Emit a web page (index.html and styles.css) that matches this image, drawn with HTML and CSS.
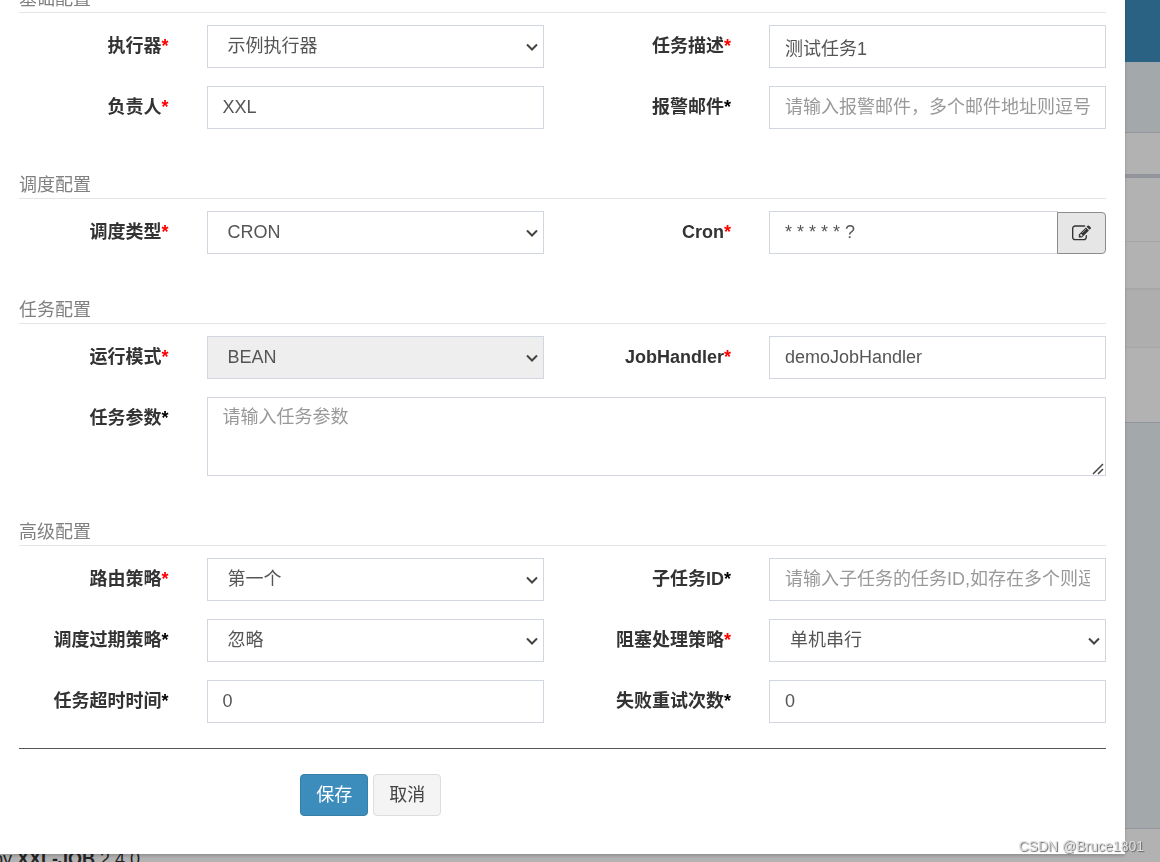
FILE: index.html
```html
<!DOCTYPE html>
<html lang="zh-CN">
<head>
<meta charset="utf-8">
<title>任务管理 - XXL-JOB</title>
<link rel="stylesheet" href="styles.css">
</head>
<body>
<svg class="defs" width="0" height="0" aria-hidden="true">
  <symbol id="chevron" viewBox="0 0 12 8"><path d="M1 1.500l5 5 5-5" fill="none" stroke="currentColor" stroke-width="2"/></symbol>
</svg>
<div class="page">
  <div class="topbar"></div>
  <div class="content-head"></div>
  <div class="box">
    <div class="box-filter"></div>
    <div class="box-table">
      <div class="tools"></div>
      <div class="thead"></div>
      <div class="row-odd"></div>
      <div class="row-even"></div>
    </div>
  </div>
  <footer class="page-footer">by <b>XXL-JOB</b> 2.4.0</footer>
</div>

<div class="backdrop">
  <form class="modal">
    <h2 class="section-title first">基础配置</h2>
    <div class="fields">
      <label for="group">执行器<span class="req">*</span></label>
      <div class="cell"><select id="group" class="control"><option>示例执行器</option></select><svg class="chevron"><use href="#chevron"/></svg></div>
      <label for="desc">任务描述<span class="req">*</span></label>
      <div class="cell"><input id="desc" class="control" type="text" value="测试任务1"></div>
      <label for="author">负责人<span class="req">*</span></label>
      <div class="cell"><input id="author" class="control" type="text" value="XXL"></div>
      <label for="email">报警邮件<span class="opt">*</span></label>
      <div class="cell"><input id="email" class="control" type="text" placeholder="请输入报警邮件，多个邮件地址则逗号分隔"></div>
    </div>

    <h2 class="section-title">调度配置</h2>
    <div class="fields">
      <label for="schedule">调度类型<span class="req">*</span></label>
      <div class="cell"><select id="schedule" class="control"><option>CRON</option></select><svg class="chevron"><use href="#chevron"/></svg></div>
      <label for="cron">Cron<span class="req">*</span></label>
      <div class="cell">
        <input id="cron" class="control" type="text" value="* * * * * ?">
        <button type="button" class="addon" aria-label="编辑 Cron">
          <svg class="icon" viewBox="0 0 1792 1792" aria-hidden="true"><path d="M888 1184l116-116-152-152-116 116v56h96v96h56zm440-720q-16-16-33 1l-350 350q-17 17-1 33t33-1l350-350q17-17 1-33zm80 594v190q0 119-84.500 203.500t-203.500 84.500h-832q-119 0-203.500-84.500t-84.500-203.500v-832q0-119 84.500-203.500t203.500-84.500h832q63 0 117 25 15 7 18 23 3 17-9 29l-49 49q-14 14-32 8-23-6-45-6h-832q-66 0-113 47t-47 113v832q0 66 47 113t113 47h832q66 0 113-47t47-113v-126q0-13 9-22l64-64q15-15 35-7t20 29zm-96-738l288 288-672 672h-288v-288zm444 132l-92 92-288-288 92-92q28-28 68-28t68 28l152 152q28 28 28 68t-28 68z"/></svg>
        </button>
      </div>
    </div>

    <h2 class="section-title">任务配置</h2>
    <div class="fields">
      <label for="mode">运行模式<span class="req">*</span></label>
      <div class="cell"><select id="mode" class="control" disabled><option>BEAN</option></select><svg class="chevron"><use href="#chevron"/></svg></div>
      <label for="handler">JobHandler<span class="req">*</span></label>
      <div class="cell"><input id="handler" class="control" type="text" value="demoJobHandler"></div>
      <label for="param">任务参数<span class="opt">*</span></label>
      <div class="cell wide">
        <textarea id="param" class="control" placeholder="请输入任务参数"></textarea>
        <svg class="grip" viewBox="0 0 12 12" aria-hidden="true"><path d="M1 11L11 1M6 11l5-5" fill="none" stroke="#444" stroke-width="1.500"/></svg>
      </div>
    </div>

    <h2 class="section-title">高级配置</h2>
    <div class="fields">
      <label for="route">路由策略<span class="req">*</span></label>
      <div class="cell"><select id="route" class="control"><option>第一个</option></select><svg class="chevron"><use href="#chevron"/></svg></div>
      <label for="child">子任务ID<span class="opt">*</span></label>
      <div class="cell"><input id="child" class="control" type="text" placeholder="请输入子任务的任务ID,如存在多个则逗号分隔"></div>
      <label for="misfire">调度过期策略<span class="opt">*</span></label>
      <div class="cell"><select id="misfire" class="control"><option>忽略</option></select><svg class="chevron"><use href="#chevron"/></svg></div>
      <label for="block">阻塞处理策略<span class="req">*</span></label>
      <div class="cell"><select id="block" class="control"><option>单机串行</option></select><svg class="chevron"><use href="#chevron"/></svg></div>
      <label for="timeout">任务超时时间<span class="opt">*</span></label>
      <div class="cell"><input id="timeout" class="control" type="text" value="0"></div>
      <label for="retry">失败重试次数<span class="opt">*</span></label>
      <div class="cell"><input id="retry" class="control" type="text" value="0"></div>
    </div>

    <hr class="divider">
    <div class="actions">
      <button type="submit" class="btn primary">保存</button>
      <button type="button" class="btn">取消</button>
    </div>
  </form>
</div>
<div class="watermark">CSDN @Bruce1801</div>
</body>
</html>
```
FILE: styles.css
```css
* {
  box-sizing: border-box;
}

body {
  margin: 0;
  height: 100vh;
  overflow: hidden;
  font-family: "Liberation Sans", "Noto Sans CJK SC", sans-serif;
  font-size: 18px;
  line-height: 25px;
  color: #333;
}

.defs {
  position: absolute;
}

/* Page behind the dialog */
.page {
  display: flex;
  flex-direction: column;
  height: 100vh;
  background: #eaf1f5;
}

.topbar {
  height: 62px;
  background: #3c8dbc;
}

.content-head {
  height: 70px;
}

.box {
  background: #fff;
  border-top: 1px solid #d2d6de;
  border-bottom: 1px solid #d2d6de;
}

.box-filter {
  height: 41px;
}

.box-table {
  border-top: 4px solid #d2d6de;
}

.tools {
  height: 64px;
  border-bottom: 1px solid #f0f0f0;
}

.thead {
  height: 48px;
  border-bottom: 2px solid #f0f0f0;
}

.row-odd {
  height: 58px;
  background: #f9f9f9;
  border-bottom: 1px solid #f0f0f0;
}

.row-even {
  height: 74px;
}

.page-footer {
  height: 34px;
  margin-top: auto;
  margin-left: -7px;
  padding-top: 18px;
  background: #fff;
  border-top: 1px solid #d2d6de;
  white-space: nowrap;
}

/* Dialog */
.backdrop {
  position: fixed;
  inset: 0;
  overflow: hidden;
  background: rgba(0, 0, 0, 0.3);
}

.modal {
  margin: -13px 35px 0 0;
  padding-bottom: 38px;
  background: #fff;
  box-shadow: 0 2px 3px rgba(0, 0, 0, 0.2);
}

.section-title {
  margin: 44px 19px 12px;
  border-bottom: 1px solid #e5e5e5;
  font-size: 18px;
  font-weight: 400;
  line-height: 25px;
  color: #808080;
}

.section-title.first {
  margin-top: 0;
}

.fields {
  display: grid;
  grid-template-columns: 2fr 4fr 2fr 4fr;
  row-gap: 18px;
}

.fields label {
  padding: 9px 19px 0 0;
  font-weight: 700;
  text-align: right;
  white-space: nowrap;
}

.req {
  color: #f00;
}

.opt {
  color: #000;
}

.cell {
  position: relative;
  display: flex;
  min-width: 0;
  padding: 0 19px;
}

.wide {
  grid-column: span 3;
}

.control {
  flex: 1;
  width: 100%;
  min-width: 0;
  height: 43px;
  padding: 7px 15px;
  border: 1px solid #d2d6de;
  border-radius: 0;
  background: #fff;
  font: inherit;
  color: #555;
}

select.control {
  appearance: none;
  padding: 7px 20px;
}

.control:disabled {
  background: #eee;
  opacity: 1;
}

.control::placeholder {
  color: #999;
}

textarea.control {
  height: 79px;
}

textarea.control::-webkit-resizer {
  background: transparent;
}

.chevron {
  position: absolute;
  top: 18px;
  right: 25px;
  width: 12px;
  height: 8px;
  color: #444;
  pointer-events: none;
}

.grip {
  position: absolute;
  right: 21px;
  bottom: 1px;
  width: 12px;
  height: 12px;
  pointer-events: none;
}

.addon {
  width: 49px;
  height: 42px;
  align-self: flex-end;
  margin-left: -1px;
  padding: 0;
  border: 1px solid #8c8c8c;
  border-radius: 0 4px 4px 0;
  background: #e6e6e6;
}

.icon {
  display: block;
  width: 19px;
  height: 19px;
  margin: 0 auto;
  fill: #333;
}

.divider {
  height: 1px;
  margin: 25px 19px;
  border: 0;
  background: #555;
}

.actions {
  display: flex;
  gap: 5px;
  padding-left: calc(25% + 19px);
}

.btn {
  height: 42px;
  padding: 0 15px;
  border: 1px solid #ddd;
  border-radius: 4px;
  background: #f4f4f4;
  font: inherit;
  color: #444;
}

.btn.primary {
  border-color: #367fa9;
  background: #3c8dbc;
  color: #fff;
}

.watermark {
  position: fixed;
  right: 16px;
  bottom: 3px;
  font-size: 14px;
  color: #ddd;
  text-shadow: 1px 1px 1px #666;
}
```
